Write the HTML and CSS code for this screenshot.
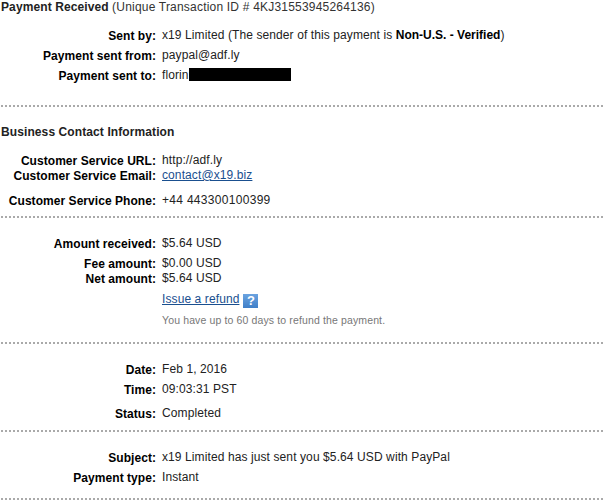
FILE: index.html
```html
<!DOCTYPE html>
<html lang="en">
<head>
    <meta charset="UTF-8">
    <meta name="viewport" content="width=device-width, initial-scale=1.0">
    <title>Payment Received</title>
    <link rel="stylesheet" href="styles.css">
</head>
<body>
    <div class="section first">
        <h1 class="heading">Payment Received <span class="heading-note">(Unique Transaction ID # 4KJ31553945264136)</span></h1>
        <div class="rows sent">
            <div class="row"><span class="label">Sent by:</span><span class="value">x19 Limited (The sender of this payment is <b>Non-U.S. - Verified</b>)</span></div>
            <div class="row"><span class="label">Payment sent from:</span><span class="value">paypal@adf.ly</span></div>
            <div class="row"><span class="label">Payment sent to:</span><span class="value">florin<span class="redacted"></span></span></div>
        </div>
    </div>

    <div class="section contact">
        <h2 class="heading bold">Business Contact Information</h2>
        <div class="rows contact-rows">
            <div class="row tight"><span class="label">Customer Service URL:</span><span class="value">http://adf.ly</span></div>
            <div class="row wider"><span class="label">Customer Service Email:</span><span class="value"><a href="#">contact@x19.biz</a></span></div>
            <div class="row"><span class="label">Customer Service Phone:</span><span class="value phone">+44 443300100399</span></div>
        </div>
    </div>

    <div class="section amounts">
        <div class="rows">
            <div class="row"><span class="label">Amount received:</span><span class="value">$5.64 USD</span></div>
            <div class="row tight"><span class="label">Fee amount:</span><span class="value">$0.00 USD</span></div>
            <div class="row refund"><span class="label">Net amount:</span><span class="value">$5.64 USD</span></div>
            <div class="row refund"><span class="label"></span><span class="value"><a href="#">Issue a refund</a><span class="help">?</span></span></div>
            <div class="row"><span class="label"></span><span class="value hint">You have up to 60 days to refund the payment.</span></div>
        </div>
    </div>

    <div class="section dates">
        <div class="rows">
            <div class="row"><span class="label">Date:</span><span class="value">Feb 1, 2016</span></div>
            <div class="row wide"><span class="label">Time:</span><span class="value">09:03:31 PST</span></div>
            <div class="row"><span class="label">Status:</span><span class="value">Completed</span></div>
        </div>
    </div>

    <div class="section subject">
        <div class="rows">
            <div class="row"><span class="label">Subject:</span><span class="value">x19 Limited has just sent you $5.64 USD with PayPal</span></div>
            <div class="row"><span class="label">Payment type:</span><span class="value">Instant</span></div>
        </div>
    </div>
</body>
</html>
```

FILE: styles.css
```css
body {
    font-family: "Liberation Sans", Arial, sans-serif;
    font-size: 12px;
    line-height: 14px;
    color: #222;
    background-color: #fff;
    margin: 0;
    padding: 0 2px 0 1px;
}
.section {
    border-bottom: 2px dotted #aaa;
}
.first {
    height: 105px;
}
.contact {
    height: 109px;
}
.amounts {
    height: 124px;
}
.dates {
    height: 86px;
}
.subject {
    height: 66px;
}
.heading {
    font-size: 12px;
    font-weight: bold;
    line-height: 14px;
    letter-spacing: 0.1px;
    margin: 0;
}
.heading-note {
    font-weight: normal;
    letter-spacing: 0.2px;
    color: #333;
}
.sent {
    padding-top: 14px;
}
.contact .heading {
    padding-top: 18px;
}
.contact-rows {
    padding-top: 14px;
}
.amounts .rows {
    padding-top: 18px;
}
.dates .rows {
    padding-top: 18px;
}
.subject .rows {
    padding-top: 18px;
}
.row {
    display: flex;
    height: 20px;
}
.row.tight {
    height: 15px;
}
.row.wide {
    height: 24px;
}
.row.wider {
    height: 25px;
}
.row.refund {
    height: 21px;
}
.label {
    width: 155px;
    flex-shrink: 0;
    text-align: right;
    font-weight: bold;
    letter-spacing: 0.05px;
    color: #000;
    padding-top: 1px;
}
.value {
    margin-left: 6px;
    letter-spacing: 0.1px;
}
.value a {
    color: #1a4f8f;
    text-decoration: underline;
}
.value b {
    color: #000;
    letter-spacing: 0;
}
.phone {
    letter-spacing: 0.3px;
}
.redacted {
    display: inline-block;
    width: 102px;
    height: 13px;
    background-color: #000;
    vertical-align: -2px;
}
.help {
    display: inline-block;
    width: 15px;
    height: 14px;
    margin-left: 4px;
    background: linear-gradient(#6ba3e0, #3f7fc8);
    color: #fff;
    font-weight: bold;
    font-size: 13px;
    line-height: 14px;
    text-align: center;
    vertical-align: -2px;
}
.hint {
    font-size: 10.5px;
    letter-spacing: 0.13px;
    color: #777;
}
```
